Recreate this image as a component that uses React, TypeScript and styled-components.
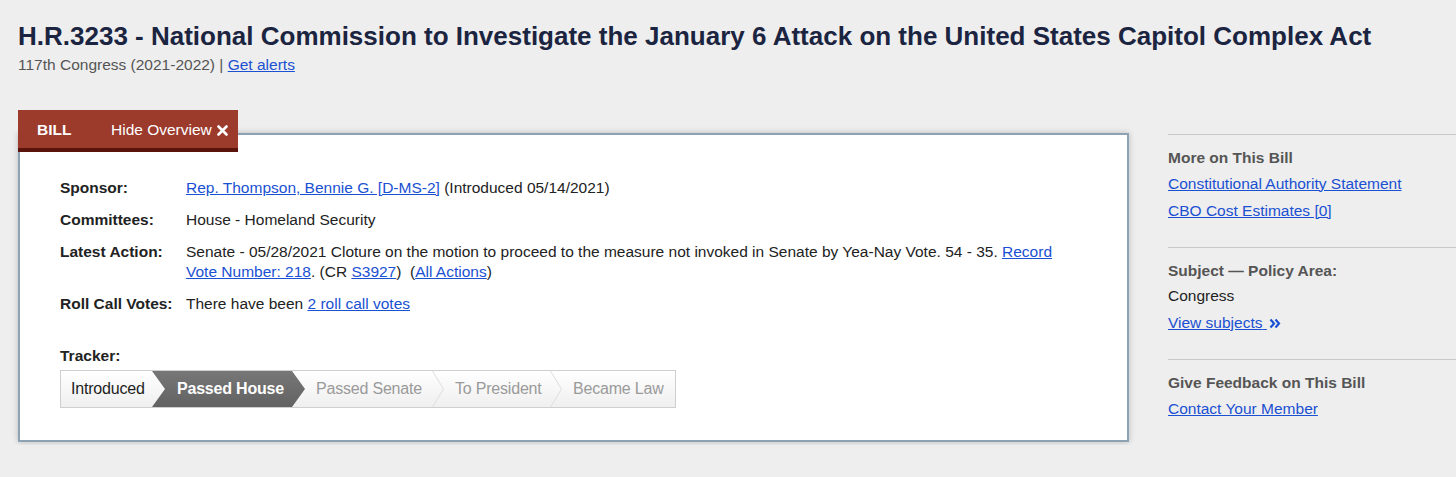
import React from "react";
import styled, { createGlobalStyle } from "styled-components";

const Global = createGlobalStyle`
  html, body { margin: 0; padding: 0; background: #eeeeee; }
  body { font-family: "Liberation Sans", Arial, Helvetica, sans-serif; color: #222; }
  a { color: #1a50d2; text-decoration: underline; }
`;

const Page = styled.div`
  padding: 20px 0 0 18px;
  width: 1438px;
`;

const Title = styled.h1`
  margin: 0;
  font-size: 26px;
  line-height: 32px;
  font-weight: 700;
  color: #1b2440;
  white-space: nowrap;
`;

const Subtitle = styled.div`
  font-size: 15.5px;
  line-height: 20px;
  color: #555;
  margin-top: 3px;
`;

const Columns = styled.div`
  display: flex;
  align-items: flex-start;
  gap: 39px;
  margin-top: 58px;
`;

const PanelWrap = styled.div`
  position: relative;
  width: 1111px;
  flex: none;
`;

const Tab = styled.div`
  position: absolute;
  left: 0;
  top: -23px;
  width: 220px;
  height: 36px;
  padding-top: 2px;
  background: #9c3a2c;
  border-bottom: 4px solid #5a140b;
  display: flex;
  align-items: center;
  color: #fff;
  font-size: 15.5px;
  z-index: 2;
`;

const TabLabel = styled.span`
  font-weight: 700;
  margin-left: 19px;
  width: 74px;
`;

const TabToggle = styled.span`
  display: inline-flex;
  align-items: center;
  gap: 5px;
`;

const Panel = styled.div`
  background: #fff;
  border: 2px solid #8da2b2;
  box-shadow: 0 0 6px rgba(0, 0, 0, 0.22);
  padding: 43px 40px 32px 40px;
  height: 230px;
`;

const Facts = styled.div`
  display: grid;
  grid-template-columns: 126px 1fr;
  row-gap: 12px;
  font-size: 15.5px;
  line-height: 20px;
  max-width: 1010px;
`;

const Label = styled.div`
  font-weight: 700;
  color: #222;
`;

const Value = styled.div`
  color: #222;
`;

const TrackerLabel = styled.div`
  font-weight: 700;
  font-size: 15.5px;
  line-height: 20px;
  margin-top: 32px;
`;

const Tracker = styled.div`
  display: flex;
  width: 614px;
  height: 36px;
  margin-top: 4px;
  border: 1px solid #cfcfcf;
  background: linear-gradient(#ffffff, #efefef);
`;

const Step = styled.div<{ $w: number; $pl: number; $state: "done" | "current" | "todo" }>`
  flex: none;
  width: ${(p) => p.$w}px;
  padding-left: ${(p) => p.$pl}px;
  box-sizing: border-box;
  display: flex;
  align-items: center;
  font-size: 16px;
  letter-spacing: -0.2px;
  white-space: nowrap;
  color: ${(p) => (p.$state === "done" ? "#1e1e1e" : p.$state === "current" ? "#fff" : "#9a9a9a")};
  font-weight: ${(p) => (p.$state === "current" ? 700 : 400)};
  ${(p) =>
    p.$state === "current"
      ? `background: linear-gradient(#777, #626262);
         clip-path: polygon(0 0, calc(100% - 13px) 0, 100% 50%, calc(100% - 13px) 100%, 0 100%, 13px 50%);`
      : ""}
`;

const SepSvg = styled.svg`
  flex: none;
  display: block;
`;

const Sep = () => (
  <SepSvg width="12" height="36" viewBox="0 0 12 36">
    <polyline points="0.5,0 11.5,18 0.5,36" fill="none" stroke="#dedede" strokeWidth="1" />
  </SepSvg>
);

const Sidebar = styled.aside`
  flex: 1;
  font-size: 15.5px;
  line-height: 20px;
  margin-top: 1px;
`;

const Section = styled.section`
  border-top: 1px solid #c8c8c8;
  padding: 13px 0 26px 0;
  display: flex;
  flex-direction: column;
  gap: 7px;
  align-items: flex-start;
`;

const SideHeading = styled.div`
  font-weight: 700;
  color: #555;
  margin-bottom: -1.5px;
`;

const SideText = styled.div`
  color: #222;
`;

const Chevrons = styled.svg`
  vertical-align: -1px;
  margin-left: 2px;
`;

export default function App() {
  return (
    <>
      <Global />
      <Page>
        <Title>H.R.3233 - National Commission to Investigate the January 6 Attack on the United States Capitol Complex Act</Title>
        <Subtitle>
          117th Congress (2021-2022) | <a href="#">Get alerts</a>
        </Subtitle>
        <Columns>
          <PanelWrap>
            <Tab>
              <TabLabel>BILL</TabLabel>
              <TabToggle>
                Hide Overview
                <svg width="11" height="11" viewBox="0 0 11 11">
                  <path d="M1.5 1.5 L9.5 9.5 M9.5 1.5 L1.5 9.5" stroke="#fff" strokeWidth="2.6" strokeLinecap="round" />
                </svg>
              </TabToggle>
            </Tab>
            <Panel>
              <Facts>
                <Label>Sponsor:</Label>
                <Value>
                  <a href="#">Rep. Thompson, Bennie G. [D-MS-2]</a> (Introduced 05/14/2021)
                </Value>
                <Label>Committees:</Label>
                <Value>House - Homeland Security</Value>
                <Label>Latest Action:</Label>
                <Value>
                  Senate - 05/28/2021 Cloture on the motion to proceed to the measure not invoked in Senate by Yea-Nay Vote. 54 - 35.{" "}
                  <a href="#">Record Vote Number: 218</a>. (CR <a href="#">S3927</a>)&nbsp; (<a href="#">All Actions</a>)
                </Value>
                <Label>Roll Call Votes:</Label>
                <Value>
                  There have been <a href="#">2 roll call votes</a>
                </Value>
              </Facts>
              <TrackerLabel>Tracker:</TrackerLabel>
              <Tracker>
                <Step $w={91} $pl={10} $state="done">Introduced</Step>
                <Step $w={153} $pl={25} $state="current">Passed House</Step>
                <Step $w={127} $pl={11} $state="todo">Passed Senate</Step>
                <Sep />
                <Step $w={106} $pl={11} $state="todo">To President</Step>
                <Sep />
                <Step $w={113} $pl={11} $state="todo">Became Law</Step>
              </Tracker>
            </Panel>
          </PanelWrap>
          <Sidebar>
            <Section>
              <SideHeading>More on This Bill</SideHeading>
              <a href="#">Constitutional Authority Statement</a>
              <a href="#">CBO Cost Estimates [0]</a>
            </Section>
            <Section>
              <SideHeading>Subject — Policy Area:</SideHeading>
              <SideText>Congress</SideText>
              <a href="#">
                View subjects{" "}
                <Chevrons width="12" height="11" viewBox="0 0 12 11">
                  <path d="M1.5 1.5 L5 5.5 L1.5 9.5 M6.5 1.5 L10 5.5 L6.5 9.5" fill="none" stroke="#1a50d2" strokeWidth="2.2" />
                </Chevrons>
              </a>
            </Section>
            <Section>
              <SideHeading>Give Feedback on This Bill</SideHeading>
              <a href="#">Contact Your Member</a>
            </Section>
          </Sidebar>
        </Columns>
      </Page>
    </>
  );
}
